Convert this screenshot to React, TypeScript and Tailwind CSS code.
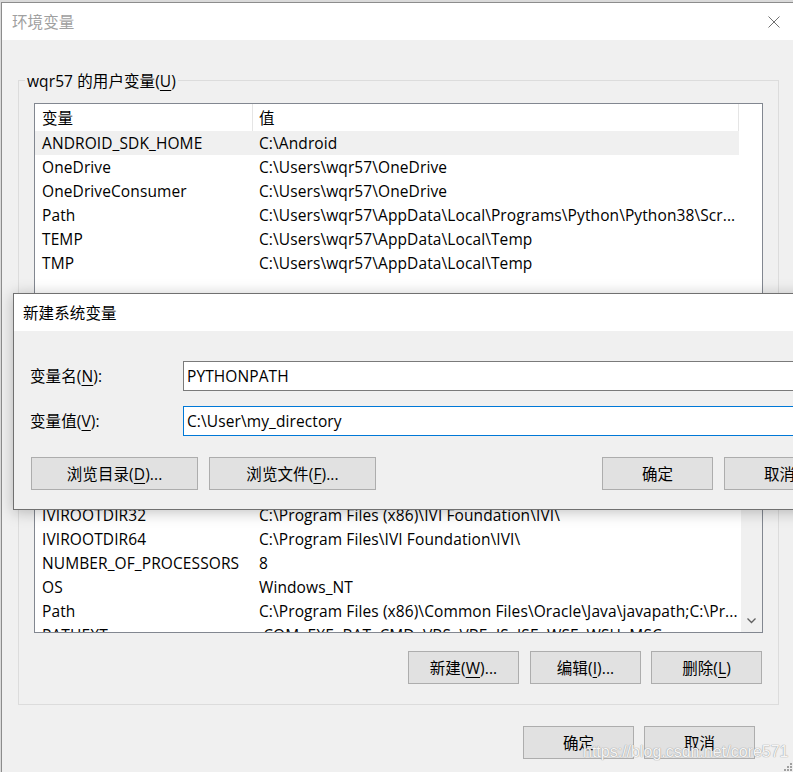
import React from "react";

type Item = { name: string; value: string; selected?: boolean };

const userVars: Item[] = [
  { name: "ANDROID_SDK_HOME", value: "C:\\Android", selected: true },
  { name: "OneDrive", value: "C:\\Users\\wqr57\\OneDrive" },
  { name: "OneDriveConsumer", value: "C:\\Users\\wqr57\\OneDrive" },
  { name: "Path", value: "C:\\Users\\wqr57\\AppData\\Local\\Programs\\Python\\Python38\\Scr..." },
  { name: "TEMP", value: "C:\\Users\\wqr57\\AppData\\Local\\Temp" },
  { name: "TMP", value: "C:\\Users\\wqr57\\AppData\\Local\\Temp" },
];

const sysVars: Item[] = [
  { name: "IVIROOTDIR32", value: "C:\\Program Files (x86)\\IVI Foundation\\IVI\\" },
  { name: "IVIROOTDIR64", value: "C:\\Program Files\\IVI Foundation\\IVI\\" },
  { name: "NUMBER_OF_PROCESSORS", value: "8" },
  { name: "OS", value: "Windows_NT" },
  { name: "Path", value: "C:\\Program Files (x86)\\Common Files\\Oracle\\Java\\javapath;C:\\Pr..." },
  { name: "PATHEXT", value: ".COM;.EXE;.BAT;.CMD;.VBS;.VBE;.JS;.JSE;.WSF;.WSH;.MSC" },
];

const Row = ({ item }: { item: Item }) => (
  <div className={`flex h-[24px] shrink-0 items-center whitespace-nowrap ${item.selected ? "bg-[#f0f0f0]" : ""}`}>
    <div className="w-[218px] shrink-0 overflow-hidden pl-[7px]">{item.name}</div>
    <div className="flex-1 overflow-hidden pl-[6px]">{item.value}</div>
  </div>
);

const Btn = ({ children, className = "" }: { children: React.ReactNode; className?: string }) => (
  <div className={`flex h-[33px] shrink-0 items-center justify-center border border-[#adadad] bg-[#e1e1e1] ${className}`}>
    {children}
  </div>
);

const Key = ({ k }: { k: string }) => <u className="underline underline-offset-[3px] decoration-1">{k}</u>;

export default function App() {
  return (
    <div className="relative h-[772px] w-[793px] overflow-hidden bg-[#dadada] pl-[1px] pt-[2px] font-['Open_Sans','Noto_Sans_CJK_SC',sans-serif] text-[15.5px] leading-[20px] tracking-[0.1px] text-black">
      {/* main window */}
      <div className="h-[780px] w-[792px] border-l border-t border-[#8c8c8c] bg-[#f0f0f0]">
        <div className="flex h-[37px] items-center justify-between bg-white pl-[10px] pr-[13px]">
          <span className="text-[#a0a0a0]">环境变量</span>
          <svg width="12" height="12" viewBox="0 0 12 12">
            <path d="M0.5 0.5 L11.5 11.5 M11.5 0.5 L0.5 11.5" stroke="#707070" strokeWidth="1" fill="none" />
          </svg>
        </div>

        <div className="pt-[40px]">
          {/* group box */}
          <div className="ml-[16px] h-[625px] w-[761px] border border-[#dcdcdc]">
            <div className="-mt-[10px] ml-[6px] w-fit bg-[#f0f0f0] px-[2px]">
              wqr57 的用户变量(<Key k="U" />)
            </div>

            <div className="ml-[15px] mt-[12px] flex h-[530px] w-[729px] flex-col overflow-hidden border border-[#828790] bg-white">
              <div className="flex h-[27px] shrink-0">
                <div className="flex w-[704px] items-center border-r border-[#e5e5e5]">
                  <div className="flex h-full w-[218px] items-center border-r border-[#e5e5e5] pl-[7px]">变量</div>
                  <div className="pl-[6px]">值</div>
                </div>
              </div>
              <div className="flex w-[704px] flex-col">
                {userVars.map((v) => (
                  <Row key={v.name} item={v} />
                ))}
              </div>
              <div className="h-[228px] shrink-0" />
              <div className="flex h-[129px] shrink-0">
                <div className="flex flex-1 flex-col overflow-hidden">
                  {sysVars.map((v) => (
                    <Row key={v.name} item={v} />
                  ))}
                </div>
                <div className="flex w-[21px] flex-col justify-end bg-[#f0f0f0]">
                  <div className="flex h-[22px] items-center justify-center">
                    <svg width="9" height="6" viewBox="0 0 9 6">
                      <path d="M0.5 0.5 L4.5 4.5 L8.5 0.5" stroke="#606060" strokeWidth="1.3" fill="none" />
                    </svg>
                  </div>
                </div>
              </div>
            </div>

            <div className="mt-[18px] flex justify-end gap-[10px] pr-[16px]">
              <Btn className="mr-[1px] w-[111px]">
                新建(<Key k="W" />)...
              </Btn>
              <Btn className="w-[111px]">
                编辑(<Key k="I" />)...
              </Btn>
              <Btn className="w-[111px]">
                删除(<Key k="L" />)
              </Btn>
            </div>
          </div>

          <div className="ml-[521px] mt-[21px] flex gap-[10px]">
            <Btn className="w-[111px]">确定</Btn>
            <Btn className="w-[111px]">取消</Btn>
          </div>
        </div>
      </div>

      {/* new system variable dialog */}
      <div className="absolute left-[13px] top-[293px] h-[217px] w-[800px] border border-[#707070] bg-[#f0f0f0] shadow-[0_2px_14px_rgba(0,0,0,0.25)]">
        <div className="flex h-[37px] items-center bg-white pl-[9px]">新建系统变量</div>
        <div className="pt-[30px]">
          <div className="flex items-center">
            <div className="w-[169px] shrink-0 pl-[16px]">
              变量名(<Key k="N" />):
            </div>
            <div className="flex h-[30px] w-[700px] shrink-0 items-center border border-[#7a7a7a] bg-white pl-[3px]">PYTHONPATH</div>
          </div>
          <div className="mt-[15px] flex items-center">
            <div className="w-[169px] shrink-0 pl-[16px]">
              变量值(<Key k="V" />):
            </div>
            <div className="flex h-[30px] w-[700px] shrink-0 items-center border border-[#0078d7] bg-white pl-[3px]">C:\User\my_directory</div>
          </div>
          <div className="ml-[17px] mt-[21px] flex">
            <Btn className="w-[167px]">
              浏览目录(<Key k="D" />)...
            </Btn>
            <Btn className="ml-[11px] w-[167px]">
              浏览文件(<Key k="F" />)...
            </Btn>
            <Btn className="ml-[226px] w-[111px]">确定</Btn>
            <Btn className="ml-[11px] w-[111px]">取消</Btn>
          </div>
        </div>
      </div>

      {/* watermark */}
      <div className="absolute left-[583px] top-[743px] font-['Liberation_Sans',sans-serif] text-[16px] leading-[18px] tracking-normal text-white/90 [text-shadow:0_0_1px_#9a9a9a,0_0_1px_#9a9a9a]">
        https://blog.csdn.net/core571
      </div>

      {/* resize grip */}
      <svg className="absolute bottom-[1px] right-[1px]" width="8" height="8" viewBox="0 0 8 8">
        <rect x="6" y="0" width="2" height="2" fill="#a0a0a0" />
        <rect x="3" y="3" width="2" height="2" fill="#a0a0a0" />
        <rect x="6" y="3" width="2" height="2" fill="#a0a0a0" />
        <rect x="0" y="6" width="2" height="2" fill="#a0a0a0" />
        <rect x="3" y="6" width="2" height="2" fill="#a0a0a0" />
        <rect x="6" y="6" width="2" height="2" fill="#a0a0a0" />
      </svg>
    </div>
  );
}
